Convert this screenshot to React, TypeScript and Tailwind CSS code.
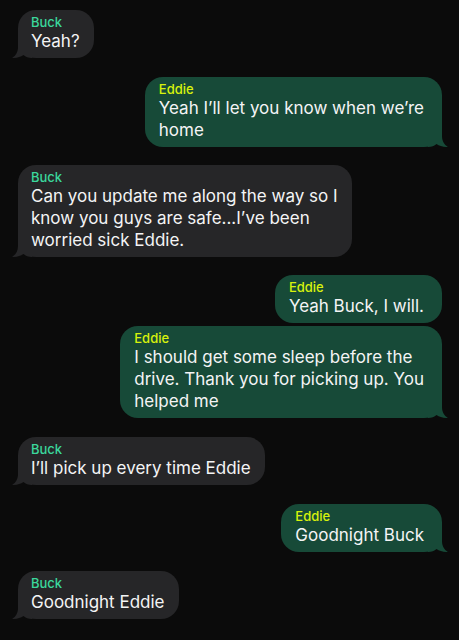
const messages = [
  { from: "Buck", lines: ["Yeah?"], tail: true, gap: "" },
  { from: "Eddie", lines: ["Yeah I’ll let you know when we’re", "home"], tail: true, gap: "mt-[19px]" },
  {
    from: "Buck",
    lines: ["Can you update me along the way so I", "know you guys are safe...I’ve been", "worried sick Eddie."],
    tail: true,
    gap: "mt-[18px]",
  },
  { from: "Eddie", lines: ["Yeah Buck, I will."], tail: false, gap: "mt-[18px]" },
  {
    from: "Eddie",
    lines: ["I should get some sleep before the", "drive. Thank you for picking up. You", "helped me"],
    tail: true,
    gap: "mt-[3px]",
  },
  { from: "Buck", lines: ["I’ll pick up every time Eddie"], tail: true, gap: "mt-[19px]" },
  { from: "Eddie", lines: ["Goodnight Buck"], tail: true, gap: "mt-[19px]" },
  { from: "Buck", lines: ["Goodnight Eddie"], tail: true, gap: "mt-[19px]" },
];

function Tail({ mine }: { mine: boolean }) {
  return (
    <svg
      width="20"
      height="20"
      viewBox="0 0 20 20"
      className={
        mine
          ? "absolute bottom-0 right-[-6px] -scale-x-100 fill-[#174a38]"
          : "absolute bottom-0 left-[-6px] fill-[#262628]"
      }
    >
      <path d="M6 0 L6 9 C6 14.5 3.5 18 0 19.8 C4.5 20.2 8.5 19 11.5 17 C13.5 18.8 16.5 20 20 20 L20 0 Z" />
    </svg>
  );
}

export default function App() {
  return (
    <div
      className="flex min-h-screen w-full flex-col bg-[#0b0b0b] pb-[21px] pl-[18px] pr-[17px] pt-[10px] text-[#f4f4f5]"
      style={{ fontFamily: "Inter, 'Noto Sans', sans-serif" }}
    >
      {messages.map((m, i) => {
        const mine = m.from === "Eddie";
        return (
          <div key={i} className={`flex ${mine ? "justify-end" : "justify-start"} ${m.gap}`}>
            <div
              className={`relative rounded-[18px] pb-[6px] pt-[4px] ${
                mine ? "bg-[#174a38] pl-[14px] pr-[18px]" : "bg-[#262628] pl-[13px] pr-[14px]"
              }`}
            >
              {m.tail && <Tail mine={mine} />}
              <div className="relative">
                <p
                  className={`text-[13px] font-medium leading-[16px] ${
                    mine ? "text-[#d7f20c]" : "text-[#3bd89c]"
                  }`}
                >
                  {m.from}
                </p>
                {m.lines.map((line) => (
                  <p key={line} className="whitespace-nowrap text-[17px] leading-[22px]">
                    {line}
                  </p>
                ))}
              </div>
            </div>
          </div>
        );
      })}
    </div>
  );
}
